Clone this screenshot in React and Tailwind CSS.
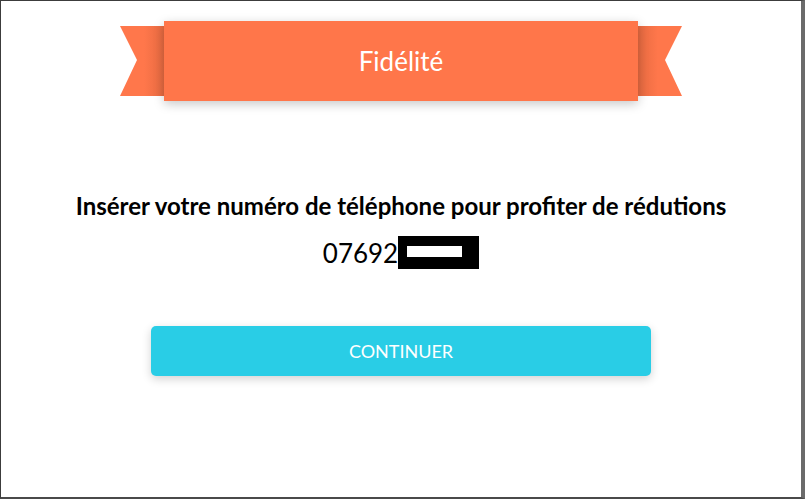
import React from 'react'

const Tail = ({ side }) => {
  const left = side === 'left'
  const id = `tail-${side}`
  return (
    <svg width="44" height="70" viewBox="0 0 44 70" className="block">
      <defs>
        <linearGradient id={id} x1={left ? '0' : '1'} y1="0" x2={left ? '1' : '0'} y2="0">
          <stop offset="0.55" stopColor="#ff774b" />
          <stop offset="1" stopColor="#e66a41" />
        </linearGradient>
      </defs>
      <polygon
        points={left ? '0,0 44,0 44,70 0,70 17,34' : '0,0 44,0 27,34 44,70 0,70'}
        fill={`url(#${id})`}
      />
    </svg>
  )
}

export default function App() {
  return (
    <div
      className="w-[805px] h-[499px] bg-white border-t border-l border-[#3c3c3c] border-r-[4px] border-r-[#6b6b6b] border-b-2 border-b-[#4a4a4a] flex flex-col items-center"
      style={{ fontFamily: 'Lato, "Open Sans", Arial, sans-serif' }}
    >
      {/* Ribbon */}
      <div className="mt-[20px] flex items-center">
        <Tail side="left" />
        <div className="relative z-10 w-[474px] h-[80px] bg-[#ff764a] flex items-center justify-center shadow-[0_3px_10px_rgba(0,0,0,0.22)]">
          <span className="text-white text-[26px] leading-none">Fidélité</span>
        </div>
        <Tail side="right" />
      </div>

      {/* Prompt */}
      <h1 className="mt-[93px] text-[24px] font-bold text-black leading-none">
        Insérer votre numéro de téléphone pour profiter de rédutions
      </h1>

      <div className="mt-[18px] flex items-center">
        <span className="text-[26px] text-black leading-none">07692</span>
        <div className="w-[81px] h-[33px] bg-black flex items-start pt-[10px] pl-[9px]">
          <div className="w-[55px] h-[11px] bg-white" />
        </div>
      </div>

      {/* Button */}
      <button className="mt-[57px] w-[500px] h-[50px] rounded-[5px] bg-[#29cde6] text-white text-[18px] uppercase shadow-[0_3px_10px_rgba(0,0,0,0.18)]">
        Continuer
      </button>
    </div>
  )
}
